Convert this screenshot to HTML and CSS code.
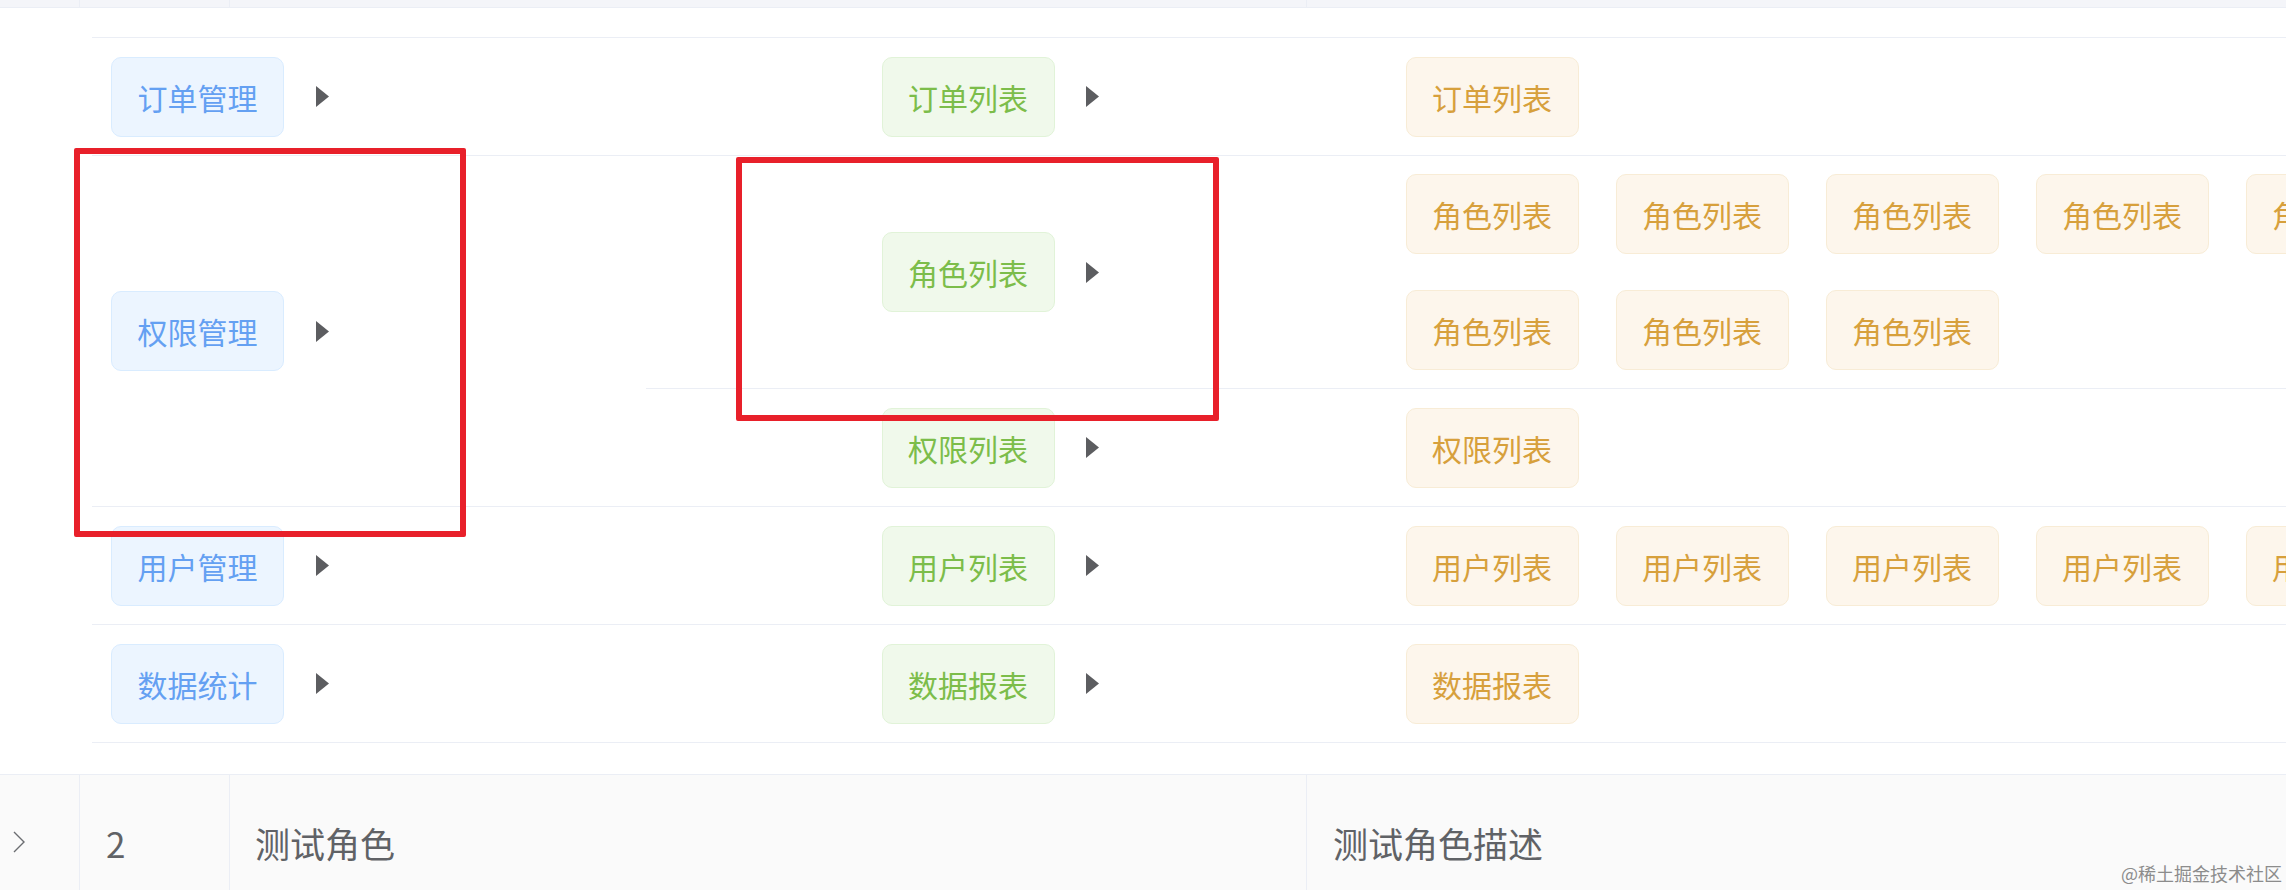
FILE: index.html
```html
<!DOCTYPE html>
<html lang="zh">
<head>
<meta charset="utf-8">
<title>角色权限</title>
<link rel="stylesheet" href="styles.css">
</head>
<body>
<div class="page">
  <div class="trow prev">
    <div class="c c-exp"></div><div class="c c-id"></div><div class="c c-name"></div><div class="c c-desc"></div>
  </div>

  <div class="expanded">
    <div class="tree">
      <div class="l1">
        <div class="l1-cell"><div class="node"><span class="tag blue">订单管理</span><svg class="caret" viewBox="0 0 13 21"><polygon points="0,0 13,10.5 0,21"/></svg></div></div>
        <div class="l2-list">
          <div class="l2">
            <div class="l2-cell"><div class="node"><span class="tag green">订单列表</span><svg class="caret" viewBox="0 0 13 21"><polygon points="0,0 13,10.5 0,21"/></svg></div></div>
            <div class="l3-cell"><span class="tag orange">订单列表</span></div>
          </div>
        </div>
      </div>

      <div class="l1">
        <div class="l1-cell"><div class="node"><span class="tag blue">权限管理</span><svg class="caret" viewBox="0 0 13 21"><polygon points="0,0 13,10.5 0,21"/></svg></div></div>
        <div class="l2-list">
          <div class="l2">
            <div class="l2-cell"><div class="node"><span class="tag green">角色列表</span><svg class="caret" viewBox="0 0 13 21"><polygon points="0,0 13,10.5 0,21"/></svg></div></div>
            <div class="l3-cell">
              <span class="tag orange">角色列表</span><span class="tag orange">角色列表</span><span class="tag orange">角色列表</span><span class="tag orange">角色列表</span><span class="tag orange">角色列表</span>
              <span class="tag orange">角色列表</span><span class="tag orange">角色列表</span><span class="tag orange">角色列表</span>
            </div>
          </div>
          <div class="l2">
            <div class="l2-cell"><div class="node"><span class="tag green">权限列表</span><svg class="caret" viewBox="0 0 13 21"><polygon points="0,0 13,10.5 0,21"/></svg></div></div>
            <div class="l3-cell"><span class="tag orange">权限列表</span></div>
          </div>
        </div>
      </div>

      <div class="l1">
        <div class="l1-cell"><div class="node"><span class="tag blue">用户管理</span><svg class="caret" viewBox="0 0 13 21"><polygon points="0,0 13,10.5 0,21"/></svg></div></div>
        <div class="l2-list">
          <div class="l2">
            <div class="l2-cell"><div class="node"><span class="tag green">用户列表</span><svg class="caret" viewBox="0 0 13 21"><polygon points="0,0 13,10.5 0,21"/></svg></div></div>
            <div class="l3-cell">
              <span class="tag orange">用户列表</span><span class="tag orange">用户列表</span><span class="tag orange">用户列表</span><span class="tag orange">用户列表</span><span class="tag orange">用户列表</span>
            </div>
          </div>
        </div>
      </div>

      <div class="l1">
        <div class="l1-cell"><div class="node"><span class="tag blue">数据统计</span><svg class="caret" viewBox="0 0 13 21"><polygon points="0,0 13,10.5 0,21"/></svg></div></div>
        <div class="l2-list">
          <div class="l2">
            <div class="l2-cell"><div class="node"><span class="tag green">数据报表</span><svg class="caret" viewBox="0 0 13 21"><polygon points="0,0 13,10.5 0,21"/></svg></div></div>
            <div class="l3-cell"><span class="tag orange">数据报表</span></div>
          </div>
        </div>
      </div>
    </div>
  </div>

  <div class="trow main">
    <div class="c c-exp"><svg class="chev" viewBox="0 0 12 22"><polyline points="1,1 11,11 1,21"/></svg></div>
    <div class="c c-id">2</div>
    <div class="c c-name">测试角色</div>
    <div class="c c-desc">测试角色描述</div>
  </div>

  <div class="mark mark-a"></div>
  <div class="mark mark-b"></div>
</div>
<div class="watermark">@稀土掘金技术社区</div>
</body>
</html>
```

FILE: styles.css
```css
html, body {
  margin: 0;
  padding: 0;
  background: #ffffff;
  overflow: hidden;
}
body {
  font-family: "Noto Sans CJK SC", "Noto Sans", sans-serif;
  color: #606266;
  width: 2286px;
  height: 890px;
  position: relative;
}
.page {
  position: relative;
  width: 2437px;
}

/* outer table rows */
.trow {
  display: flex;
  border-bottom: 1px solid #ebeef5;
}
.trow .c {
  box-sizing: border-box;
  border-right: 1px solid #ebeef5;
  display: flex;
  align-items: center;
}
.c-exp { flex: 0 0 80px; padding-left: 13px; }
.c-id { flex: 0 0 150px; padding-left: 26px; }
.c-name { flex: 0 0 1077px; padding-left: 25px; }
.c-desc { flex: 1 1 auto; padding-left: 26px; border-right: none !important; }

.prev {
  height: 7px;
  background: #f4f5f9;
}
.main {
  height: 134px;
  background: #fafafa;
  font-size: 35px;
  color: #606266;
  border-bottom: none;
}
.chev {
  width: 12px;
  height: 22px;
  fill: none;
  stroke: #6b6d71;
  stroke-width: 1.4;
}

/* expanded area */
.expanded {
  box-sizing: border-box;
  padding: 29px 0 31px 92px;
  border-bottom: 1px solid #ebeef5;
}
.tree {
  width: 2345px;
  border-top: 1px solid #ebeef5;
}
.l1 {
  display: flex;
  border-bottom: 1px solid #ebeef5;
}
.l1-cell {
  flex: 0 0 554px;
  box-sizing: border-box;
  padding-left: 0.5px;
  display: flex;
  align-items: center;
}
.l2-list {
  flex: 0 0 1791px;
  display: flex;
  flex-direction: column;
}
.l2 {
  display: flex;
  border-bottom: 1px solid #ebeef5;
}
.l2:last-child {
  border-bottom: none;
}
.l2-cell {
  flex: 0 0 741px;
  box-sizing: border-box;
  padding-left: 217px;
  display: flex;
  align-items: center;
}
.l3-cell {
  flex: 0 0 1050px;
  min-height: 117px;
  display: flex;
  flex-wrap: wrap;
  align-content: center;
}
.node {
  display: flex;
  align-items: center;
}
.caret {
  width: 13px;
  height: 21px;
  margin-left: 13px;
  fill: #5c5d60;
}

/* tags */
.tag {
  display: block;
  box-sizing: border-box;
  height: 80px;
  margin: 18px 18.5px;
  padding: 0 25.5px;
  line-height: 78px;
  font-size: 30px;
  border: 1px solid;
  border-radius: 10px;
  white-space: nowrap;
}
.blue {
  background: #ecf5ff;
  border-color: #d9ecff;
  color: #64a0f2;
}
.green {
  background: #f0f9eb;
  border-color: #e1f3d8;
  color: #7cbd4a;
}
.orange {
  background: #fdf6ec;
  border-color: #f8ecd6;
  color: #d7a03c;
}

/* annotation boxes */
.mark {
  position: absolute;
  box-sizing: border-box;
  border: 6px solid #e8202a;
  border-radius: 2px;
}
.mark-a {
  left: 74px;
  top: 148px;
  width: 392px;
  height: 389px;
}
.mark-b {
  left: 736px;
  top: 157px;
  width: 483px;
  height: 264px;
}

.watermark {
  position: absolute;
  left: 2121px;
  top: 860px;
  font-size: 18px;
  color: #8c8c8c;
  white-space: nowrap;
}
```
